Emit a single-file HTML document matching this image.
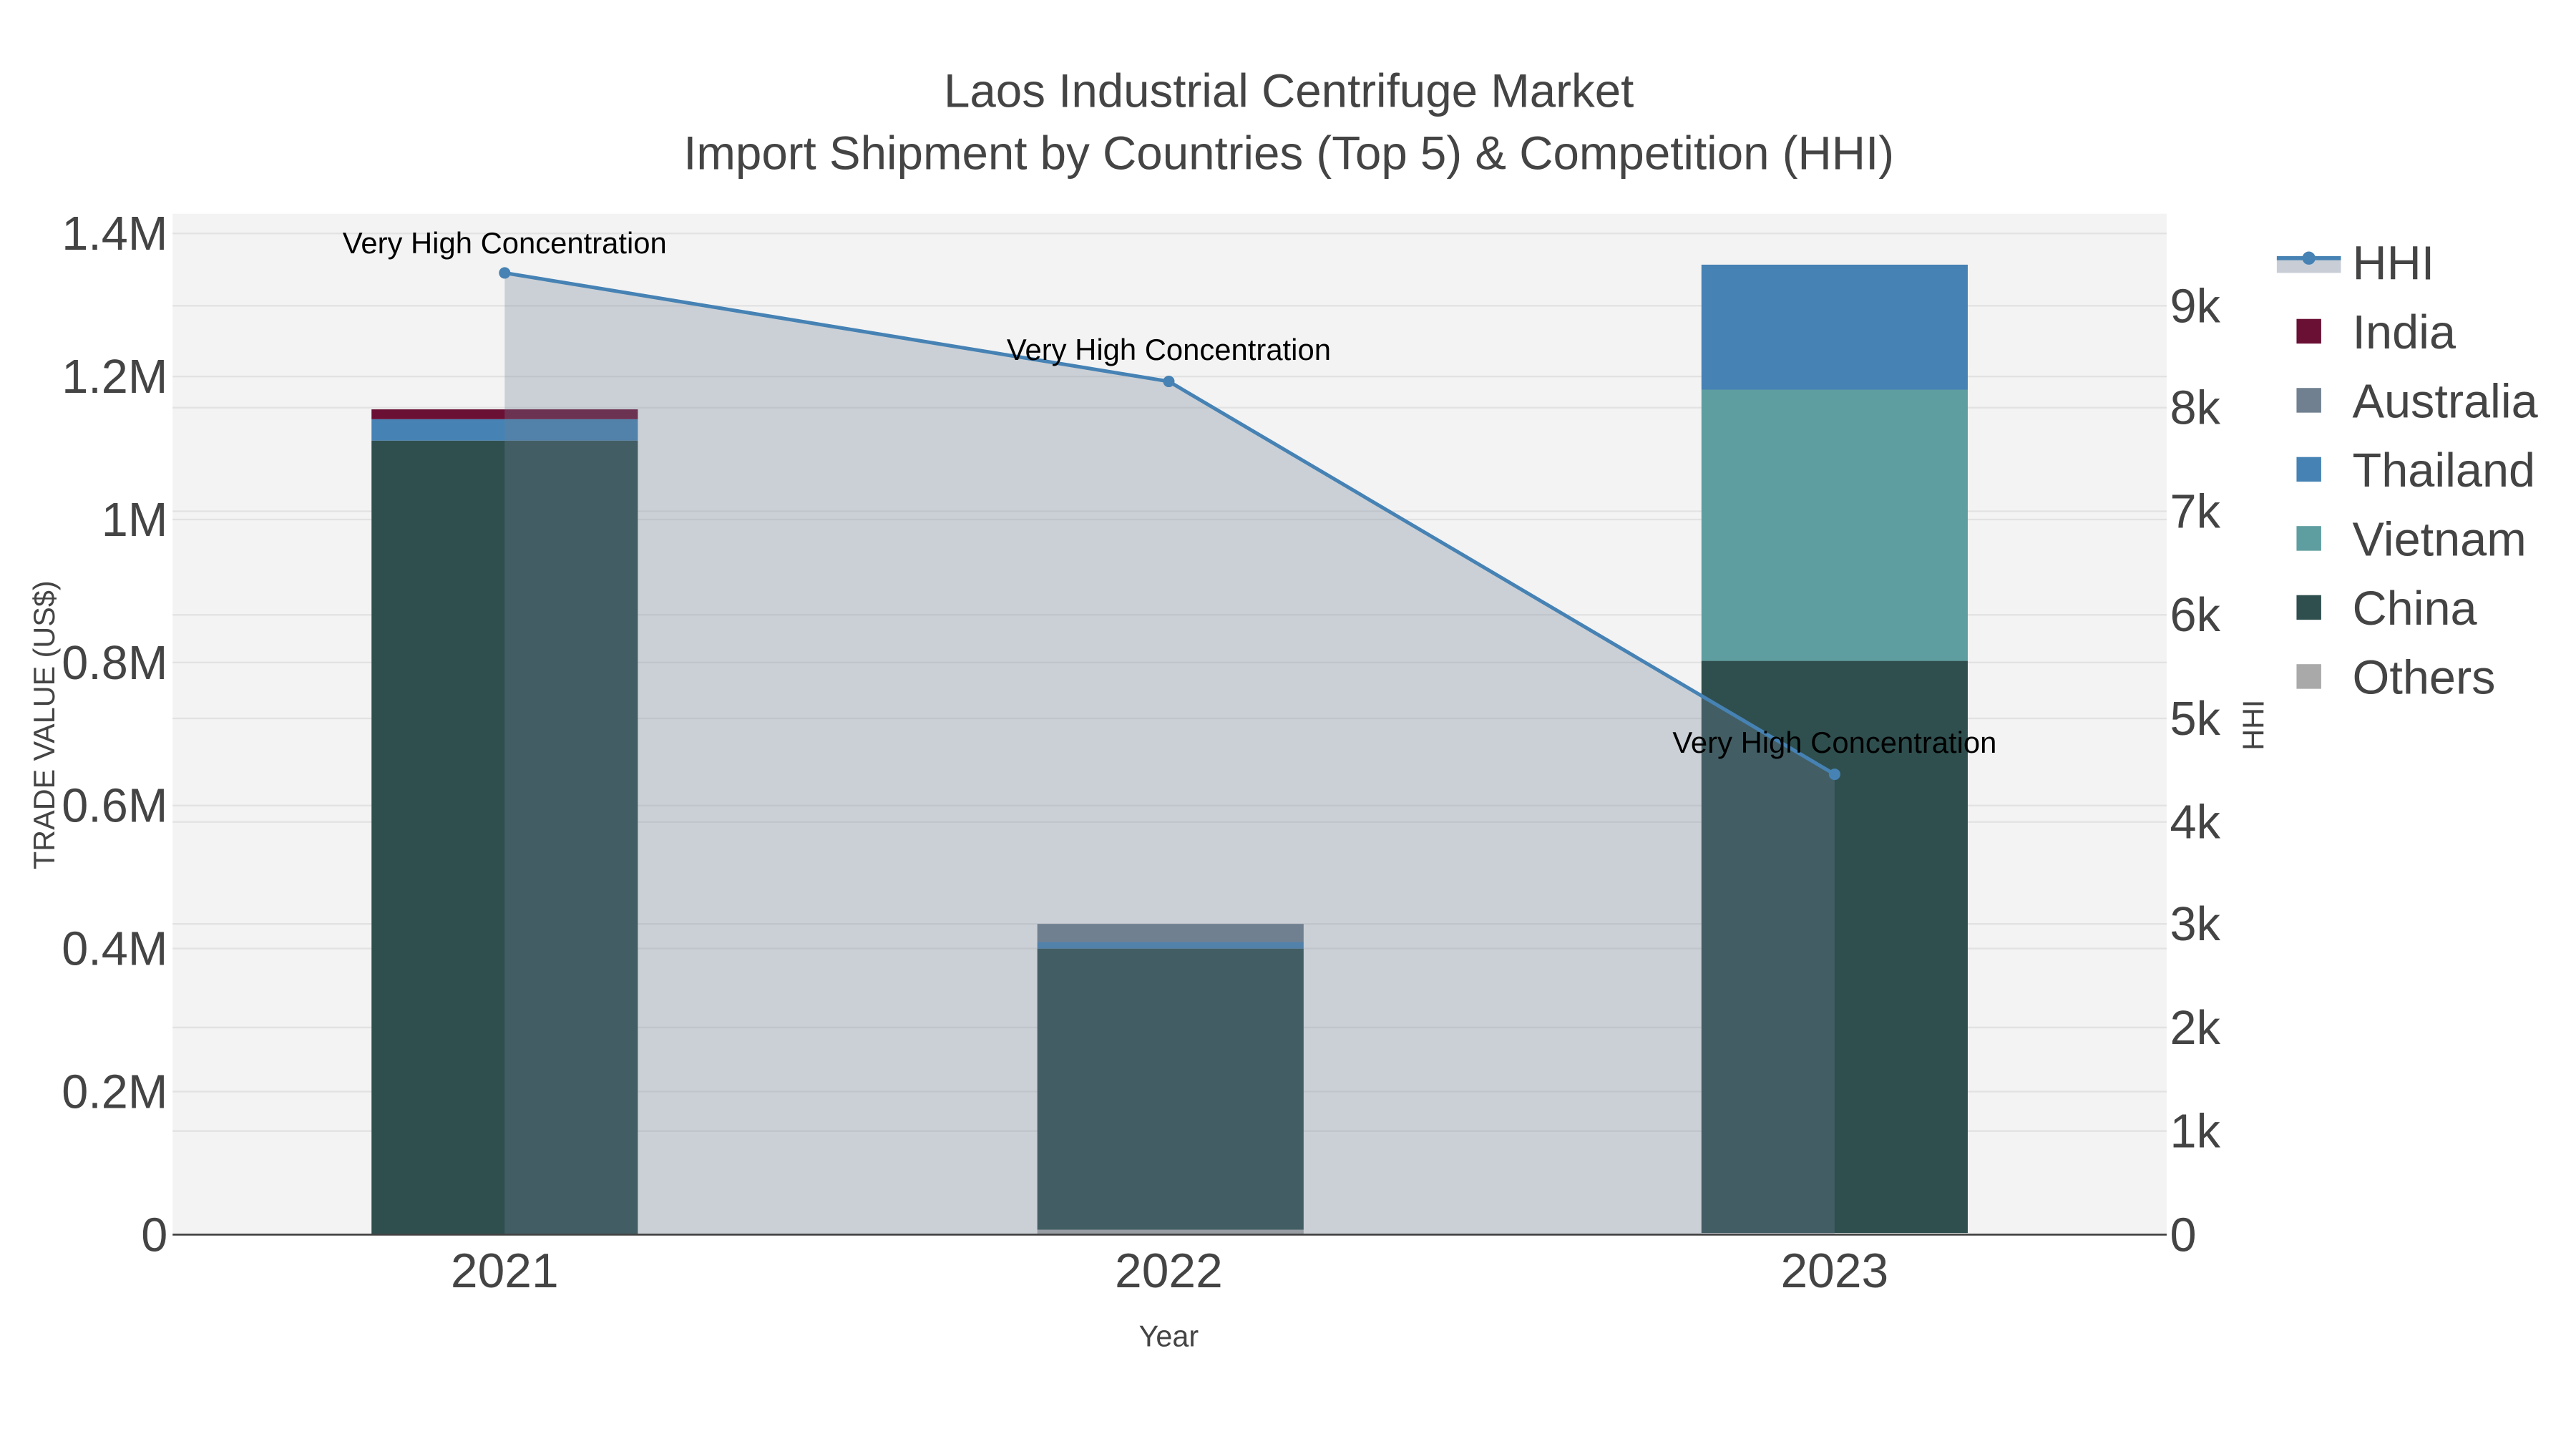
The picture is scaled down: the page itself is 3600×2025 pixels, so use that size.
<!DOCTYPE html>
<html><head><meta charset="utf-8"><style>html,body{margin:0;padding:0;background:#fff}svg{display:block}</style></head><body>
<svg width="3600" height="2025" viewBox="0 0 1567 881.4" preserveAspectRatio="none" xmlns="http://www.w3.org/2000/svg" font-family="Liberation Sans, sans-serif">
<rect width="1567" height="882" fill="#fff"/>
<rect x="105" y="130" width="1213" height="621" fill="#f3f3f3"/>
<g stroke="#e2e2e2" stroke-width="1">
<line x1="105" x2="1318" y1="664" y2="664"/><line x1="105" x2="1318" y1="577" y2="577"/><line x1="105" x2="1318" y1="490" y2="490"/><line x1="105" x2="1318" y1="403" y2="403"/><line x1="105" x2="1318" y1="316" y2="316"/><line x1="105" x2="1318" y1="229" y2="229"/><line x1="105" x2="1318" y1="142" y2="142"/>
<line x1="105" x2="1318" y1="688" y2="688"/><line x1="105" x2="1318" y1="625" y2="625"/><line x1="105" x2="1318" y1="562" y2="562"/><line x1="105" x2="1318" y1="500" y2="500"/><line x1="105" x2="1318" y1="437" y2="437"/><line x1="105" x2="1318" y1="374" y2="374"/><line x1="105" x2="1318" y1="311" y2="311"/><line x1="105" x2="1318" y1="248" y2="248"/><line x1="105" x2="1318" y1="186" y2="186"/>
</g>
<rect x="226" y="268" width="162" height="483" fill="#2f4f4f"/>
<rect x="226" y="255" width="162" height="13" fill="#4682b4"/>
<rect x="226" y="249" width="162" height="6" fill="#6b1035"/>
<rect x="631" y="577" width="162" height="171" fill="#2f4f4f"/>
<rect x="631" y="748" width="162" height="3" fill="#a9a9a9"/>
<rect x="631" y="573" width="162" height="4" fill="#4682b4"/>
<rect x="631" y="562" width="162" height="11" fill="#708090"/>
<rect x="1035" y="402" width="162" height="348" fill="#2f4f4f"/>
<rect x="1035" y="237" width="162" height="165" fill="#5f9ea0"/>
<rect x="1035" y="161" width="162" height="76" fill="#4682b4"/>
<polygon points="307,166 711,232 1116,471 1116,751 307,751" fill="rgba(112,128,150,0.3)"/>
<line x1="105" x2="1318" y1="751" y2="751" stroke="#444" stroke-width="1.2"/>
<polyline points="307,166 711,232 1116,471" fill="none" stroke="#4682b4" stroke-width="2.2"/>
<circle cx="307" cy="166" r="3.5" fill="#4682b4"/><circle cx="711" cy="232" r="3.5" fill="#4682b4"/><circle cx="1116" cy="471" r="3.5" fill="#4682b4"/>
<g font-size="18.2" fill="#000" text-anchor="middle">
<text x="307" y="154">Very High Concentration</text>
<text x="711" y="219">Very High Concentration</text>
<text x="1116" y="458">Very High Concentration</text>
</g>
<g font-size="28.5" fill="#444" text-anchor="middle">
<text x="784" y="65">Laos Industrial Centrifuge Market</text>
<text x="784" y="103">Import Shipment by Countries (Top 5) &amp; Competition (HHI)</text>
</g>
<g font-size="29" fill="#444" text-anchor="end">
<text x="102" y="761">0</text><text x="102" y="674">0.2M</text><text x="102" y="587">0.4M</text><text x="102" y="500">0.6M</text><text x="102" y="413">0.8M</text><text x="102" y="326">1M</text><text x="102" y="239">1.2M</text><text x="102" y="152">1.4M</text>
</g>
<g font-size="29" fill="#444">
<text x="1320" y="761">0</text><text x="1320" y="698">1k</text><text x="1320" y="635">2k</text><text x="1320" y="572">3k</text><text x="1320" y="510">4k</text><text x="1320" y="447">5k</text><text x="1320" y="384">6k</text><text x="1320" y="321">7k</text><text x="1320" y="258">8k</text><text x="1320" y="196">9k</text>
</g>
<g font-size="29.5" fill="#444" text-anchor="middle">
<text x="307" y="783">2021</text><text x="711" y="783">2022</text><text x="1116" y="783">2023</text>
</g>
<text x="711" y="819" font-size="18" fill="#444" text-anchor="middle">Year</text>
<text transform="translate(33,441) rotate(-90)" font-size="18" fill="#444" text-anchor="middle">TRADE VALUE (US$)</text>
<text transform="translate(1377,441) rotate(-90)" font-size="18" fill="#444" text-anchor="middle">HHI</text>
<rect x="1385" y="157" width="39" height="9" fill="#c9ced6"/>
<line x1="1385" x2="1424" y1="157" y2="157" stroke="#4682b4" stroke-width="2.5"/>
<circle cx="1404.5" cy="157" r="4" fill="#4682b4"/>
<rect x="1397" y="194" width="15" height="15" fill="#6b1035"/>
<rect x="1397" y="236" width="15" height="15" fill="#708090"/>
<rect x="1397" y="278" width="15" height="15" fill="#4682b4"/>
<rect x="1397" y="320" width="15" height="15" fill="#5f9ea0"/>
<rect x="1397" y="362" width="15" height="15" fill="#2f4f4f"/>
<rect x="1397" y="404" width="15" height="15" fill="#a9a9a9"/>
<g font-size="29" fill="#444">
<text x="1431" y="170">HHI</text><text x="1431" y="212">India</text><text x="1431" y="254">Australia</text><text x="1431" y="296">Thailand</text><text x="1431" y="338">Vietnam</text><text x="1431" y="380">China</text><text x="1431" y="422">Others</text>
</g>
</svg>
</body></html>
